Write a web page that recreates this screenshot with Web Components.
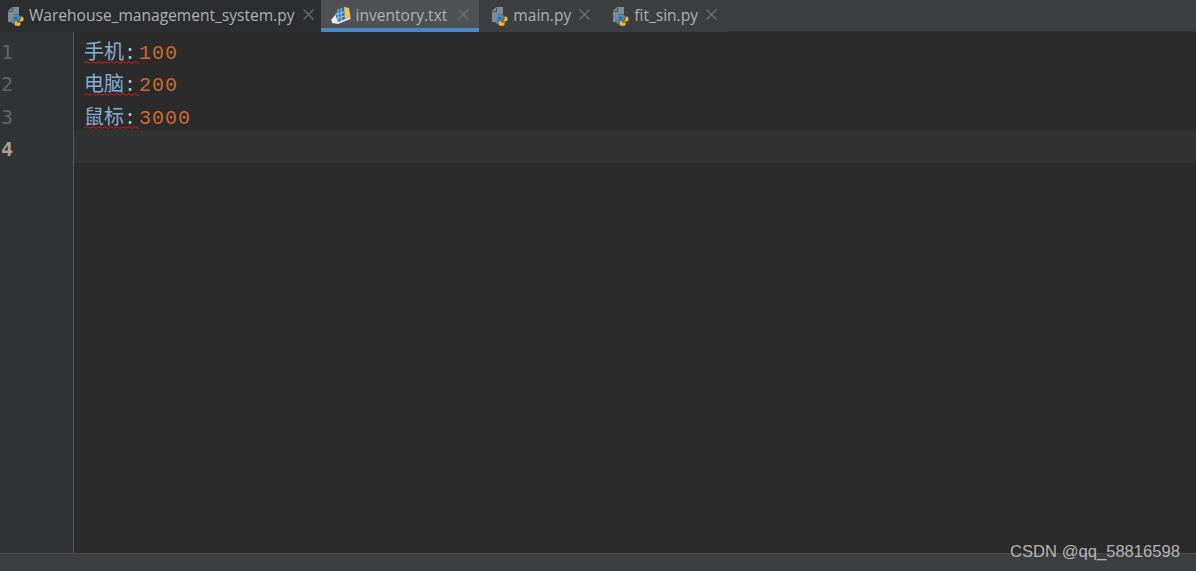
<!DOCTYPE html>
<html>
<head>
<meta charset="utf-8">
<style>
  html, body { margin: 0; height: 100%; background: #2b2b2b; overflow: hidden; }
</style>
</head>
<body>
<ide-window>
  <ide-tab slot="tabs" kind="py" label="Warehouse_management_system.py" dark></ide-tab>
  <ide-tab slot="tabs" kind="txt" label="inventory.txt" active></ide-tab>
  <ide-tab slot="tabs" kind="py" label="main.py"></ide-tab>
  <ide-tab slot="tabs" kind="py" label="fit_sin.py"></ide-tab>
  <ide-line num="1" name="手机" value="100"></ide-line>
  <ide-line num="2" name="电脑" value="200"></ide-line>
  <ide-line num="3" name="鼠标" value="3000"></ide-line>
  <ide-line num="4" current></ide-line>
</ide-window>

<script>
// 18x20 box, page corner top left, snake over bottom right
const pyIcon = `
  <svg width="18" height="20" viewBox="0 0 18 20">
    <path d="M1 5 L5 1 H12 V8 H7 V16 H1 Z" fill="#7f8b91"/>
    <path d="M1.5 5.5 H5.5 V1.5" fill="none" stroke="#4b5256" stroke-width="1"/>
    <path d="M9 8 C7 8 6.5 9 6.5 10 V11.5 H10 V12.5 H5.5 C4.5 12.5 4 13.6 4 15 C4 16.4 4.6 17.5 5.5 17.5 H7 V16 C7 15 7.8 14.4 8.8 14.4 H11 C12 14.4 12.8 13.6 12.8 12.6 V10 C12.8 8.8 11.4 8 9 8 Z" fill="#3d8ec9"/>
    <path d="M11 20 C13 20 13.6 19 13.6 18 V16.5 H10 V15.5 H14.6 C15.8 15.5 16.6 14.4 16.6 13 C16.6 11.6 15.8 10.5 14.6 10.5 H13.4 V12.4 C13.4 13.6 12.6 14.9 11.2 14.9 H9 C8 14.9 7.4 15.6 7.4 16.6 V18 C7.4 19.2 8.8 20 11 20 Z" fill="#e8b92f"/>
  </svg>`;

const txtIcon = `
  <svg width="20" height="20" viewBox="0 0 20 20">
    <path d="M0 15 L5 9 L7 18 L2 18 Z" fill="#f4f4f4"/>
    <path d="M4 9 L7 4 L13 2 L14 14 L7 17 Z" fill="#2f6fb5"/>
    <path d="M13 2 L18 3 L19.5 12 L14 14 Z" fill="#e8c45a"/>
    <path d="M1 16 L7 17 L19.5 12 L19.5 14 L7 19 L1 18 Z" fill="#e6e6e6"/>
    <path d="M7 4 L7 17 M10 3 L10.4 15.6 M4.5 9.5 L13.6 7 M5.6 13.4 L14 10.8" stroke="#a9c8ea" stroke-width="1" fill="none"/>
  </svg>`;

const tabTemplate = document.createElement('template');
tabTemplate.innerHTML = `
  <style>
    :host{
      display: flex;
      align-items: center;
      box-sizing: border-box;
      height: 32px;
      padding: 0 7px 3px 7px;
      background: #3c3f41;
      color: #afb1b3;
      font: 15.55px "Open Sans", "Liberation Sans", sans-serif;
    }
    :host([dark]){background: #2b2d2f;}
    :host([active]){
      background: #4e5254;
      box-shadow: inset 0 -4px 0 #4a88c7;
      padding-left: 10px;
      padding-right: 10px;
    }
    :host(:not([dark]):not([active])){padding-left: 12px; padding-right: 10px;}
    #icon{display: flex; margin-right: 4px; margin-top: 3px;}
    :host([active]) #icon{margin-right: 5px; margin-top: 0;}
    #label{white-space: nowrap;}
    #close{margin-left: 8px; display: flex;}
    :host([active]) #close{margin-left: 11px;}
  </style>
  <span id="icon"></span>
  <span id="label"></span>
  <span id="close">
    <svg width="11" height="11" viewBox="0 0 11 11"><path d="M0.5 0.5 L10.5 10.5 M10.5 0.5 L0.5 10.5" stroke="#6e7173" stroke-width="1.2"/></svg>
  </span>
`;

class IdeTab extends HTMLElement {
  constructor() {
    super();
    this.attachShadow({ mode: 'open' });
    this.shadowRoot.appendChild(tabTemplate.content.cloneNode(true));
  }
  connectedCallback() {
    this.shadowRoot.getElementById("label").textContent = this.getAttribute("label");
    this.shadowRoot.getElementById("icon").innerHTML = this.getAttribute("kind") == "txt" ? txtIcon : pyIcon;
  }
}
customElements.define("ide-tab", IdeTab);

const lineTemplate = document.createElement('template');
lineTemplate.innerHTML = `
  <style>
    :host{
      display: flex;
      height: 32.4px;
      font: 20px "Liberation Mono", monospace;
      line-height: 36.4px;
    }
    :host([current]){background: #323232;}
    #num{
      box-sizing: border-box;
      width: 73px;
      flex: none;
      padding-left: 1px;
      background: #313335;
      color: #606366;
      font: 20px "DejaVu Sans Mono", monospace;
      line-height: 38.4px;
    }
    :host([current]) #num{color: #a89f8f; font-weight: bold;}
    #rule{width: 1px; flex: none; background: #555555;}
    #code{padding-left: 10px; white-space: pre;}
    #name{
      display: inline-block;
      height: 36.4px;
      color: #a9c3dc;
      letter-spacing: 3px;
      background: url("data:image/svg+xml,%3Csvg xmlns='http://www.w3.org/2000/svg' width='6' height='3'%3E%3Cpath d='M0 2.5 L3 0.5 L6 2.5' fill='none' stroke='%23e81010'/%3E%3C/svg%3E") repeat-x 0 28px;
    }
    #name b{font-weight: 400; font-size: 20px; letter-spacing: 0; color: #85aed3; font-family: "Noto Sans CJK SC", sans-serif;}
    #value{color: #cc6a2c; letter-spacing: 1px;}
  </style>
  <span id="num"></span>
  <span id="rule"></span>
  <span id="code"><span id="name"></span><span id="value"></span></span>
`;

class IdeLine extends HTMLElement {
  constructor() {
    super();
    this.attachShadow({ mode: 'open' });
    this.shadowRoot.appendChild(lineTemplate.content.cloneNode(true));
  }
  connectedCallback() {
    let root = this.shadowRoot
    root.getElementById("num").textContent = this.getAttribute("num");
    if(this.hasAttribute("name")){
      let name = root.getElementById("name")
      let b = document.createElement("b")
      b.textContent = this.getAttribute("name")
      name.appendChild(b)
      name.appendChild(document.createTextNode(":"))
      root.getElementById("value").textContent = this.getAttribute("value");
    } else {
      root.getElementById("code").textContent = "";
    }
  }
}
customElements.define("ide-line", IdeLine);

const windowTemplate = document.createElement('template');
windowTemplate.innerHTML = `
  <style>
    :host{
      display: flex;
      flex-direction: column;
      position: relative;
      height: 571px;
      background: #2b2b2b;
    }
    #tabs{
      display: flex;
      flex: none;
      height: 31px;
      background: #3c3f41;
      border-bottom: 1px solid #323232;
    }
    #editor{
      flex: 1;
      display: grid;
      grid-template-columns: 73px 1px 1fr;
      min-height: 0;
    }
    #gutter{grid-column: 1; grid-row: 1; background: #313335;}
    #rule{grid-column: 2; grid-row: 1; background: #555555;}
    #lines{
      grid-column: 1 / 4;
      grid-row: 1;
      z-index: 1;
      padding-top: 1px;
    }
    #status{
      flex: none;
      height: 17px;
      background: #3c3f41;
      border-top: 1px solid #4a4d4f;
    }
    #mark{
      position: absolute;
      right: 16px;
      bottom: 9px;
      color: #b5b5b5;
      font: 16.6px "Liberation Sans", sans-serif;
      white-space: nowrap;
    }
  </style>
  <div id="tabs"><slot name="tabs"></slot></div>
  <div id="editor">
    <div id="gutter"></div>
    <div id="rule"></div>
    <div id="lines"><slot></slot></div>
  </div>
  <div id="status"></div>
  <div id="mark">CSDN @qq_58816598</div>
`;

class IdeWindow extends HTMLElement {
  constructor() {
    super();
    this.attachShadow({ mode: 'open' });
    this.shadowRoot.appendChild(windowTemplate.content.cloneNode(true));
  }
}
customElements.define("ide-window", IdeWindow);
</script>
</body>
</html>
